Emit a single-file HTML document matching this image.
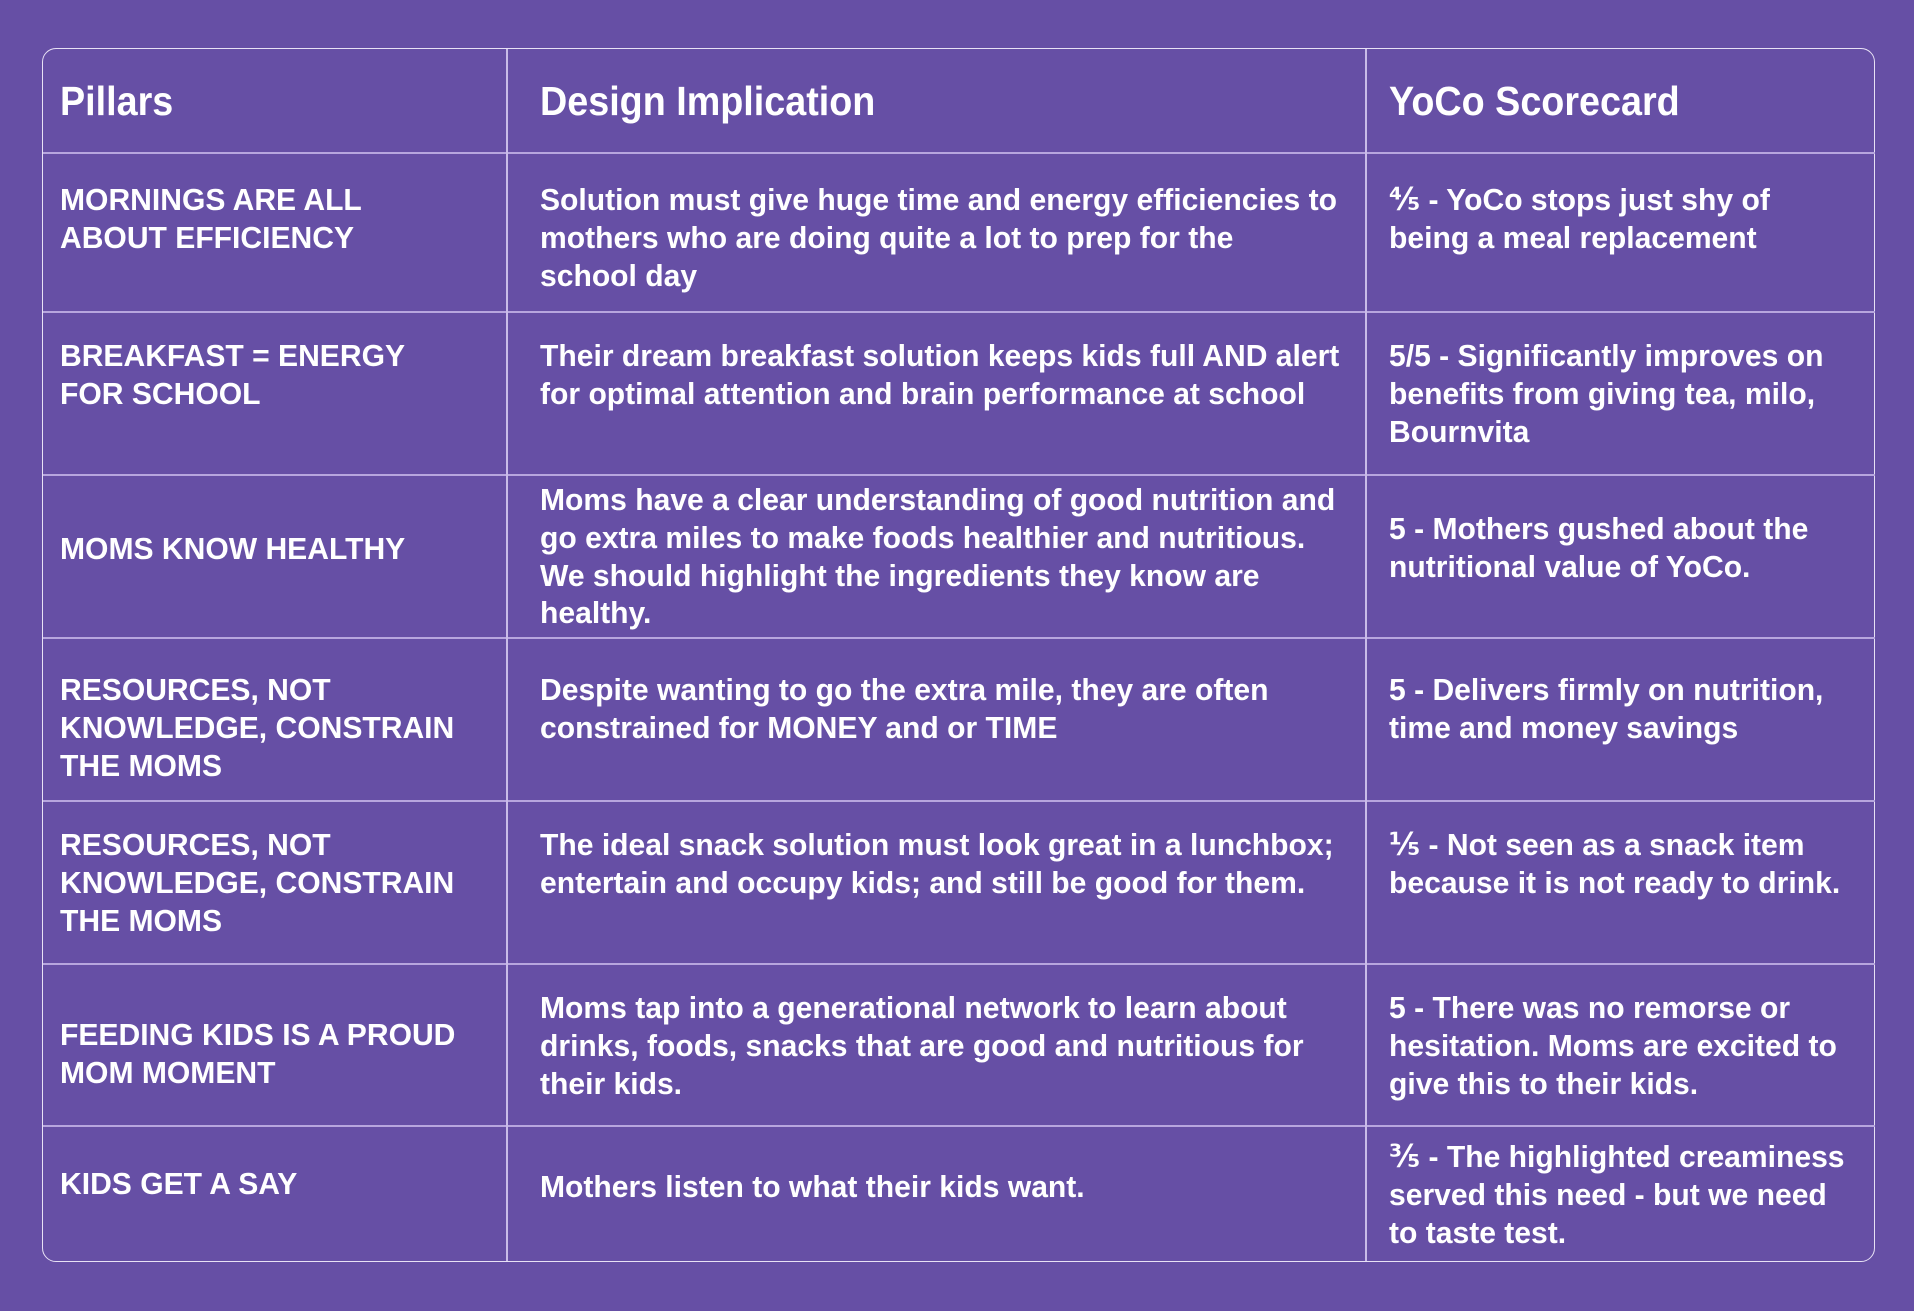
<!DOCTYPE html>
<html><head><meta charset="utf-8"><style>
html,body{margin:0;padding:0}
body{width:1914px;height:1311px;background:#664fa5;position:relative;overflow:hidden;font-family:"Liberation Sans","DejaVu Sans",sans-serif;font-weight:bold;color:#fff}
.tbl{position:absolute;left:42px;top:48px;width:1833px;height:1214px;border:1.5px solid #e8e2f5;border-radius:14px;box-sizing:border-box}
.h{position:absolute;height:1.5px;background:#b7a6de;left:43px;width:1832px}
.v{position:absolute;width:1.5px;background:#c9bce8;top:49px;height:1212px}
.t{position:absolute;font-size:31px;line-height:37.8px;white-space:nowrap;transform:scaleX(0.97);transform-origin:left top}
.hd{position:absolute;font-size:41px;line-height:48px;white-space:nowrap;transform:scaleX(0.92);transform-origin:left top;top:77px}
</style></head><body>
<div class="tbl"></div>
<div class="h" style="top:152px"></div>
<div class="h" style="top:311px"></div>
<div class="h" style="top:474px"></div>
<div class="h" style="top:637px"></div>
<div class="h" style="top:800px"></div>
<div class="h" style="top:963px"></div>
<div class="h" style="top:1125px"></div>
<div class="v" style="left:506px"></div>
<div class="v" style="left:1365px"></div>

<div class="hd" style="left:60px">Pillars</div>
<div class="hd" style="left:540px">Design Implication</div>
<div class="hd" style="left:1389px">YoCo Scorecard</div>

<div class="t" style="left:60px;top:181px">MORNINGS ARE ALL<br>ABOUT EFFICIENCY</div>
<div class="t" style="left:540px;top:181px">Solution must give huge time and energy efficiencies to<br>mothers who are doing quite a lot to prep for the<br>school day</div>
<div class="t" style="left:1389px;top:181px">⅘ - YoCo stops just shy of<br>being a meal replacement</div>

<div class="t" style="left:60px;top:337px">BREAKFAST = ENERGY<br>FOR SCHOOL</div>
<div class="t" style="left:540px;top:337px">Their dream breakfast solution keeps kids full AND alert<br>for optimal attention and brain performance at school</div>
<div class="t" style="left:1389px;top:337px">5/5 - Significantly improves on<br>benefits from giving tea, milo,<br>Bournvita</div>

<div class="t" style="left:60px;top:530px">MOMS KNOW HEALTHY</div>
<div class="t" style="left:540px;top:481px">Moms have a clear understanding of good nutrition and<br>go extra miles to make foods healthier and nutritious.<br>We should highlight the ingredients they know are<br>healthy.</div>
<div class="t" style="left:1389px;top:510px">5 - Mothers gushed about the<br>nutritional value of YoCo.</div>

<div class="t" style="left:60px;top:671px">RESOURCES, NOT<br>KNOWLEDGE, CONSTRAIN<br>THE MOMS</div>
<div class="t" style="left:540px;top:671px">Despite wanting to go the extra mile, they are often<br>constrained for MONEY and or TIME</div>
<div class="t" style="left:1389px;top:671px">5 - Delivers firmly on nutrition,<br>time and money savings</div>

<div class="t" style="left:60px;top:826px">RESOURCES, NOT<br>KNOWLEDGE, CONSTRAIN<br>THE MOMS</div>
<div class="t" style="left:540px;top:826px">The ideal snack solution must look great in a lunchbox;<br>entertain and occupy kids; and still be good for them.</div>
<div class="t" style="left:1389px;top:826px">⅕ - Not seen as a snack item<br>because it is not ready to drink.</div>

<div class="t" style="left:60px;top:1016px">FEEDING KIDS IS A PROUD<br>MOM MOMENT</div>
<div class="t" style="left:540px;top:989px">Moms tap into a generational network to learn about<br>drinks, foods, snacks that are good and nutritious for<br>their kids.</div>
<div class="t" style="left:1389px;top:989px">5 - There was no remorse or<br>hesitation. Moms are excited to<br>give this to their kids.</div>

<div class="t" style="left:60px;top:1165px">KIDS GET A SAY</div>
<div class="t" style="left:540px;top:1168px">Mothers listen to what their kids want.</div>
<div class="t" style="left:1389px;top:1138px">⅗ - The highlighted creaminess<br>served this need - but we need<br>to taste test.</div>
</body></html>
